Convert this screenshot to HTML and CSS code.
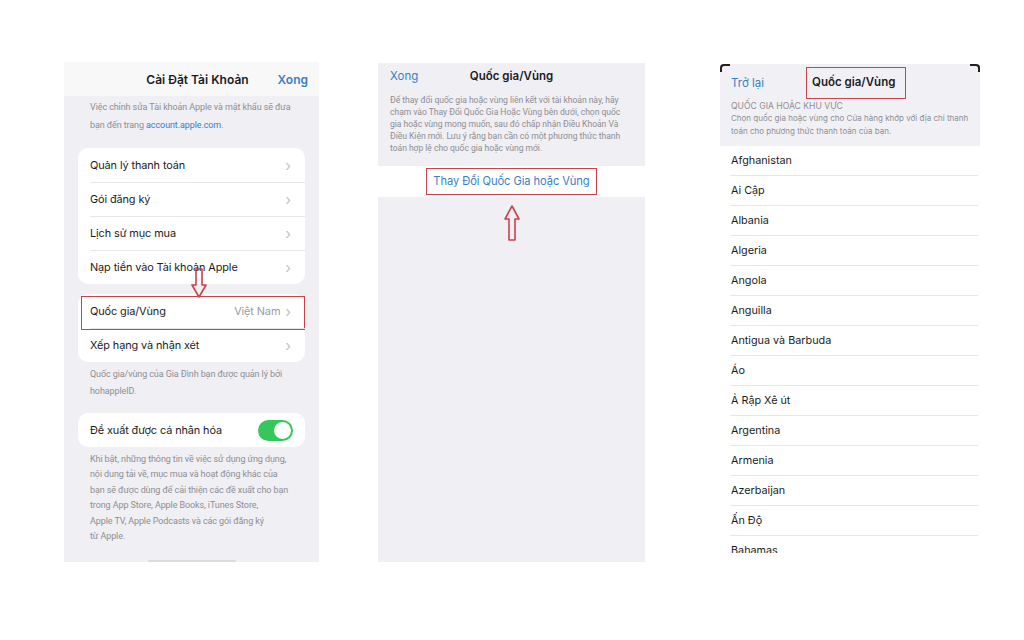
FILE: index.html
```html
<!DOCTYPE html>
<html lang="vi">
<head>
    <meta charset="UTF-8">
    <meta name="viewport" content="width=device-width, initial-scale=1.0">
    <title>Quốc gia/Vùng</title>
    <link rel="stylesheet" href="styles.css">
</head>
<body>
    <div class="shots">
        <!-- man hinh 1: cai dat tai khoan -->
        <div class="phone phone-one">
            <div class="top-bar">
                <span class="title">Cài Đặt Tài Khoản</span>
                <span class="link right">Xong</span>
            </div>
            <div class="body-one">
                <p class="note first">Việc chỉnh sửa Tài khoản Apple và mật khẩu sẽ đưa<br>bạn đến trang <span class="blue">account.apple.com</span>.</p>

                <div class="card">
                    <div class="row"><span>Quản lý thanh toán</span><span class="chev">›</span></div>
                    <div class="row"><span>Gói đăng ký</span><span class="chev">›</span></div>
                    <div class="row"><span>Lịch sử mục mua</span><span class="chev">›</span></div>
                    <div class="row"><span>Nạp tiền vào Tài khoản Apple</span><span class="chev">›</span></div>
                </div>

                <div class="card card-two">
                    <div class="row marked"><span>Quốc gia/Vùng</span><span class="value">Việt Nam <span class="chev">›</span></span></div>
                    <div class="row"><span>Xếp hạng và nhận xét</span><span class="chev">›</span></div>
                    <svg class="arrow arrow-down" width="16" height="30" viewBox="0 0 16 30">
                        <path d="M5 1 H11 V17 H15 L8 29 L1 17 H5 Z" fill="none" stroke="#c9434b" stroke-width="1.6" stroke-linejoin="round"/>
                    </svg>
                </div>

                <p class="note">Quốc gia/vùng của Gia Đình bạn được quản lý bởi<br>hohappleID.</p>

                <div class="card card-three">
                    <div class="row"><span>Đề xuất được cá nhân hóa</span><span class="toggle"><span class="knob"></span></span></div>
                </div>

                <p class="note long">Khi bật, những thông tin về việc sử dụng ứng dụng,<br>nội dung tải về, mục mua và hoạt động khác của<br>bạn sẽ được dùng để cải thiện các đề xuất cho bạn<br>trong App Store, Apple Books, iTunes Store,<br>Apple TV, Apple Podcasts và các gói đăng ký<br>từ Apple.</p>
                <div class="home-bar"></div>
            </div>
        </div>

        <!-- man hinh 2: doi quoc gia -->
        <div class="phone phone-two">
            <div class="bar-two">
                <span class="link">Xong</span>
                <span class="title">Quốc gia/Vùng</span>
            </div>
            <p class="small-note">Để thay đổi quốc gia hoặc vùng liên kết với tài khoản này, hãy<br>chạm vào Thay Đổi Quốc Gia Hoặc Vùng bên dưới, chọn quốc<br>gia hoặc vùng mong muốn, sau đó chấp nhận Điều Khoản Và<br>Điều Kiện mới. Lưu ý rằng bạn cần có một phương thức thanh<br>toán hợp lệ cho quốc gia hoặc vùng mới.</p>
            <div class="change-row">
                <span class="change-btn">Thay Đổi Quốc Gia hoặc Vùng</span>
            </div>
            <div class="arrow-wrap">
                <svg width="16" height="36" viewBox="0 0 16 36">
                    <path d="M8 1 L15 14 H11 V35 H5 V14 H1 Z" fill="none" stroke="#c9434b" stroke-width="1.6" stroke-linejoin="round"/>
                </svg>
            </div>
        </div>

        <!-- man hinh 3: danh sach quoc gia -->
        <div class="phone phone-three">
            <div class="head-three">
                <div class="bar-three">
                    <span class="link">Trở lại</span>
                    <span class="title boxed">Quốc gia/Vùng</span>
                </div>
                <div class="caps">QUỐC GIA HOẶC KHU VỰC</div>
                <p class="tiny">Chọn quốc gia hoặc vùng cho Cửa hàng khớp với địa chỉ thanh<br>toán cho phương thức thanh toán của bạn.</p>
            </div>
            <ul class="countries">
                <li>Afghanistan</li>
                <li>Ai Cập</li>
                <li>Albania</li>
                <li>Algeria</li>
                <li>Angola</li>
                <li>Anguilla</li>
                <li>Antigua và Barbuda</li>
                <li>Áo</li>
                <li>Ả Rập Xê út</li>
                <li>Argentina</li>
                <li>Armenia</li>
                <li>Azerbaijan</li>
                <li>Ấn Độ</li>
                <li>Bahamas</li>
            </ul>
        </div>
    </div>
</body>
</html>
```

FILE: styles.css
```css
body {
    margin: 0;
    background-color: #fff;
    font-family: Inter, "Noto Sans", sans-serif;
    color: #1c1c1e;
}
.shots {
    display: flex;
    align-items: flex-start;
    padding-left: 64px;
    height: 640px;
}
.phone {
    background-color: #efeff4;
    overflow: hidden;
}
.title {
    font-weight: 600;
    color: #1c1c1e;
}
.link {
    color: #3a7fc4;
}
.blue {
    color: #3a7fc4;
}

/* man hinh 1 */
.phone-one {
    width: 255px;
    height: 500px;
    margin-top: 62px;
}
.top-bar {
    height: 34px;
    background-color: #f8f8f9;
    display: flex;
    align-items: center;
    justify-content: center;
    position: relative;
    font-size: 12px;
    padding-left: 12px;
}
.top-bar .right {
    position: absolute;
    right: 11px;
    font-weight: 600;
}
.body-one {
    padding: 0 14px;
}
.note {
    margin: 4px 0 0;
    padding: 0 0 0 12px;
    font-family: Roboto, "Noto Sans", sans-serif;
    font-size: 9px;
    letter-spacing: -0.1px;
    line-height: 17px;
    color: #8e8e93;
    white-space: nowrap;
}
.note.first {
    margin-top: 2px;
    line-height: 18px;
}
.note.long {
    margin-top: 5px;
    line-height: 15.4px;
}
.card {
    background-color: #fff;
    border-radius: 10px;
    margin-top: 14px;
    position: relative;
}
.card-two {
    margin-top: 10px;
}
.card-three {
    margin-top: 13px;
}
.row {
    height: 34px;
    display: flex;
    align-items: center;
    justify-content: space-between;
    padding: 0 14px 0 12px;
    font-size: 10.9px;
    letter-spacing: -0.1px;
    position: relative;
}
.row + .row::before {
    content: "";
    position: absolute;
    top: 0;
    left: 12px;
    right: 0;
    border-top: 1px solid #e6e6ea;
}
.chev {
    color: #c4c4c8;
    font-size: 15px;
}
.value {
    color: #9a9a9e;
    display: flex;
    align-items: center;
    gap: 5px;
}
.marked::after {
    content: "";
    position: absolute;
    left: 3px;
    right: 0;
    top: 2px;
    bottom: -2px;
    border: 1.5px solid #c9434b;
}
.arrow {
    position: absolute;
}
.arrow-down {
    left: 113px;
    top: -26px;
}
.toggle {
    width: 35px;
    height: 21px;
    border-radius: 11px;
    background-color: #34c759;
    position: relative;
    margin-right: -2px;
}
.knob {
    position: absolute;
    right: 2px;
    top: 2px;
    width: 17px;
    height: 17px;
    border-radius: 50%;
    background-color: #fff;
}
.home-bar {
    width: 88px;
    height: 3px;
    margin: 16px auto 0;
    background-color: #dcdce0;
    border-radius: 2px;
}

/* man hinh 2 */
.phone-two {
    width: 267px;
    height: 499px;
    margin-top: 63px;
    margin-left: 59px;
}
.bar-two {
    height: 25px;
    display: flex;
    align-items: center;
    justify-content: center;
    position: relative;
    font-size: 11.5px;
}
.bar-two .link {
    position: absolute;
    left: 12px;
}
.small-note {
    margin: 6px 0 0;
    padding: 0 0 0 12px;
    font-family: Roboto, "Noto Sans", sans-serif;
    font-size: 8.6px;
    letter-spacing: -0.05px;
    line-height: 12px;
    color: #8e8e93;
    white-space: nowrap;
}
.change-row {
    margin-top: 12px;
    height: 31px;
    background-color: #fff;
    display: flex;
    align-items: center;
    justify-content: center;
}
.change-btn {
    color: #3a7fc4;
    font-size: 11.2px;
    letter-spacing: -0.1px;
    border: 1.5px solid #c9434b;
    padding: 5px 6px 6px;
}
.arrow-wrap {
    display: flex;
    justify-content: center;
    margin-top: 8px;
}

/* man hinh 3 */
.phone-three {
    width: 260px;
    height: 489px;
    margin-top: 64px;
    margin-left: 75px;
    background-color: #fff;
    position: relative;
}
.phone-three::before,
.phone-three::after {
    content: "";
    position: absolute;
    top: 0;
    width: 8px;
    height: 6px;
    border-top: 2px solid #222;
}
.phone-three::before {
    left: 0;
    border-left: 2px solid #222;
    border-top-left-radius: 4px;
}
.phone-three::after {
    right: 0;
    border-right: 2px solid #222;
    border-top-right-radius: 4px;
}
.head-three {
    background-color: #f1f1f5;
    padding: 1px 10px 8px 11px;
}
.bar-three {
    height: 35px;
    display: flex;
    align-items: center;
    font-size: 11.5px;
}
.bar-three .link {
    width: 75px;
}
.boxed {
    border: 1.5px solid #c9434b;
    padding: 7px 10px 9px 5px;
}
.caps {
    font-size: 8.6px;
    color: #8e8e93;
    margin-top: 1px;
    line-height: 11px;
}
.tiny {
    margin: 0;
    font-size: 8px;
    line-height: 13px;
    color: #8e8e93;
}
.countries {
    list-style: none;
    margin: 0;
    padding: 0 2px 0 10px;
}
.countries li {
    height: 29px;
    line-height: 29px;
    font-size: 10.8px;
    padding-left: 1px;
    border-bottom: 1px solid #e6e6ea;
}
```
